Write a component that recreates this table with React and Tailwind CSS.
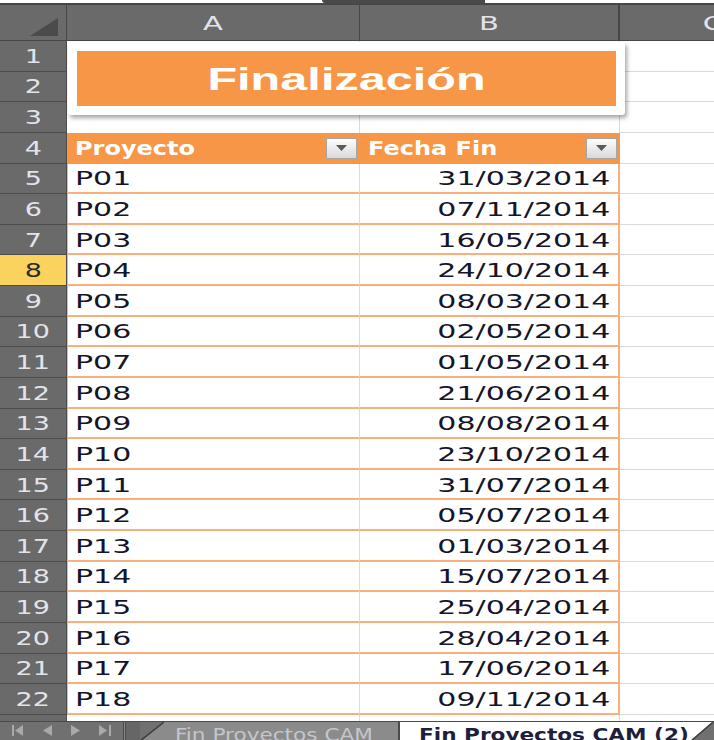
import React from 'react';

const data = [
  ['P01', '31/03/2014'],
  ['P02', '07/11/2014'],
  ['P03', '16/05/2014'],
  ['P04', '24/10/2014'],
  ['P05', '08/03/2014'],
  ['P06', '02/05/2014'],
  ['P07', '01/05/2014'],
  ['P08', '21/06/2014'],
  ['P09', '08/08/2014'],
  ['P10', '23/10/2014'],
  ['P11', '31/07/2014'],
  ['P12', '05/07/2014'],
  ['P13', '01/03/2014'],
  ['P14', '15/07/2014'],
  ['P15', '25/04/2014'],
  ['P16', '28/04/2014'],
  ['P17', '17/06/2014'],
  ['P18', '09/11/2014'],
];

// little dropdown button of the table filter
function FilterButton() {
  return (
    <div className="ml-auto w-[31px] h-[21px] flex items-center justify-center border border-[#a6a6a6] bg-gradient-to-b from-[#fdfdfd] to-[#d9d9d9]">
      <svg width="11" height="6" viewBox="0 0 11 6">
        <polygon points="0,0 11,0 5.5,6" fill="#5a5a5a" />
      </svg>
    </div>
  );
}

function RowHead({ n }) {
  const sel = n === 8;
  return (
    <div
      className={
        'w-[67px] shrink-0 flex items-center justify-center border-r border-b border-[#4c4c4c] ' +
        (sel ? 'bg-[#fad35e] text-[#2a2a2a]' : 'bg-[#6a6a6a] text-[#e2e4ea]')
      }
    >
      <span className="inline-block origin-center scale-x-[1.35]">{n}</span>
    </div>
  );
}

export default function App() {
  return (
    <div className="w-[714px] h-[740px] overflow-hidden bg-white relative text-[20px] leading-none" style={{ fontFamily: '"DejaVu Sans", Verdana, sans-serif' }}>
      {/* strip under the formula bar */}
      <div className="flex h-[3px]">
        <div className="w-[322px] bg-white" />
        <div className="w-[163px] bg-[#4a4a4a] rounded-bl-[6px]" />
        <div className="flex-1 bg-white" />
      </div>

      {/* column headers */}
      <div className="flex h-[38px] bg-[#6a6a6a] border-t-2 border-b border-[#474747] text-[#e2e4ea]">
        <div className="w-[67px] shrink-0 border-r border-[#474747] flex items-end justify-end pr-[8px] pb-[4px]">
          <svg width="28" height="18" viewBox="0 0 28 18">
            <polygon points="28,0 28,18 0,18" fill="#4b4b4b" />
          </svg>
        </div>
        <div className="w-[293px] shrink-0 border-r border-[#474747] flex items-center justify-center">
          <span className="inline-block origin-center scale-x-[1.45]">A</span>
        </div>
        <div className="w-[260px] shrink-0 border-r-2 border-[#474747] flex items-center justify-center">
          <span className="inline-block origin-center scale-x-[1.45]">B</span>
        </div>
        <div className="w-[186px] shrink-0 flex items-center justify-center">
          <span className="inline-block origin-center scale-x-[1.45]">C</span>
        </div>
      </div>

      {/* rows 1-3, under the title shape */}
      {[1, 2, 3].map((n) => (
        <div key={n} className="flex h-[30.64px]">
          <RowHead n={n} />
          <div className="w-[293px] shrink-0 border-r border-[#dadada]" />
          <div className="w-[260px] shrink-0 border-r border-[#dadada]" />
          <div className="flex-1 border-b border-[#dadada]" />
        </div>
      ))}

      {/* table header, row 4 */}
      <div className="flex h-[30.64px]">
        <RowHead n={4} />
        <div className="w-[293px] shrink-0 bg-[#f79646] flex items-center pl-[8px] pr-[3px] text-white font-bold">
          <span className="inline-block origin-left scale-x-[1.2]">Proyecto</span>
          <FilterButton />
        </div>
        <div className="w-[260px] shrink-0 bg-[#f79646] border-r-2 border-[#f79646] flex items-center pl-[8px] pr-[1px] text-white font-bold">
          <span className="inline-block origin-left scale-x-[1.2]">Fecha Fin</span>
          <FilterButton />
        </div>
        <div className="flex-1 border-b border-[#dadada]" />
      </div>

      {/* data rows */}
      {data.map(([p, d], i) => (
        <div key={p} className="flex h-[30.64px] text-[#15152a]">
          <RowHead n={i + 5} />
          <div className="w-[293px] shrink-0 border-l border-b-2 border-r border-l-[#f9b07c] border-b-[#f9b07c] border-r-[#dcdcdc] flex items-center pl-[7px] pt-[1px]">
            <span className="inline-block origin-left scale-x-[1.5]">{p}</span>
          </div>
          <div className="w-[260px] shrink-0 border-b-2 border-r-2 border-[#f9b07c] flex items-center justify-end pr-[8px] pt-[1px]">
            <span className="inline-block origin-right scale-x-[1.5]">{d}</span>
          </div>
          <div className="flex-1 border-b border-[#dadada]" />
        </div>
      ))}

      {/* row 23, cut */}
      <div className="flex h-[6px]">
        <div className="w-[67px] shrink-0 bg-[#6a6a6a] border-r border-[#4c4c4c]" />
        <div className="w-[293px] shrink-0 border-r border-[#dcdcdc]" />
        <div className="w-[260px] shrink-0 border-r border-[#dadada]" />
        <div className="flex-1" />
      </div>

      {/* sheet tabs */}
      <div className="flex h-[19px] bg-[#707070] border-t border-[#4a4a4a] text-[18px]">
        <div className="w-[123px] shrink-0 flex items-center gap-[19px] pl-[12px] text-[#a9a9a9]">
          <svg width="12" height="11" viewBox="0 0 12 11">
            <rect x="0" y="0" width="2" height="11" fill="#a9a9a9" />
            <polygon points="11,0 11,11 3,5.5" fill="#a9a9a9" />
          </svg>
          <svg width="9" height="11" viewBox="0 0 9 11">
            <polygon points="9,0 9,11 0,5.5" fill="#a9a9a9" />
          </svg>
          <svg width="9" height="11" viewBox="0 0 9 11">
            <polygon points="0,0 0,11 9,5.5" fill="#a9a9a9" />
          </svg>
          <svg width="13" height="11" viewBox="0 0 13 11">
            <polygon points="0,0 0,11 8,5.5" fill="#a9a9a9" />
            <rect x="10" y="0" width="2" height="11" fill="#a9a9a9" />
          </svg>
        </div>
        <div className="w-[3px] shrink-0 border-l border-r border-[#4a4a4a] bg-[#8a8a8a]" />
        <div className="w-[14px] shrink-0 bg-[#666]" />
        <svg width="24" height="19" viewBox="0 0 24 19" className="shrink-0">
          <polygon points="0,19 24,0 24,19" fill="#8b8b8b" />
          <line x1="0" y1="19" x2="24" y2="0" stroke="#3e3e3e" strokeWidth="1.5" />
        </svg>
        <div className="w-[236px] shrink-0 bg-[#8b8b8b] border-r-2 border-[#4a4a4a] pl-[11px] pt-[4px] text-[#c4c6cc] overflow-hidden">
          <span className="inline-block origin-left scale-x-[1.2] whitespace-nowrap">Fin Proyectos CAM</span>
        </div>
        <div className="w-[291px] shrink-0 bg-white pl-[19px] pt-[4px] text-[#1f1f3c] font-bold overflow-hidden">
          <span className="inline-block origin-left scale-x-[1.2] whitespace-nowrap">Fin Proyectos CAM (2)</span>
        </div>
        <svg width="22" height="19" viewBox="0 0 22 19" className="shrink-0">
          <polygon points="0,0 0,19 22,0" fill="#ffffff" />
          <line x1="0" y1="19" x2="22" y2="0" stroke="#3e3e3e" strokeWidth="1.5" />
        </svg>
      </div>

      {/* title shape floating over the cells */}
      <div className="absolute left-[68px] top-[42px] w-[557px] h-[73px] bg-white rounded-[3px] shadow-[2px_3px_4px_rgba(0,0,0,0.35)] p-[9px]">
        <div className="h-full bg-[#f79646] flex items-center justify-center text-white font-bold text-[32px]" style={{ fontFamily: '"Liberation Sans", Arial, sans-serif' }}>
          <span className="inline-block origin-center scale-x-[1.52]">Finalización</span>
        </div>
      </div>
    </div>
  );
}
